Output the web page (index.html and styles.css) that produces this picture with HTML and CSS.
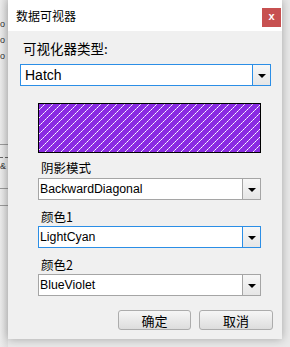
FILE: index.html
```html
<!DOCTYPE html>
<html>

<head>
    <title>数据可视器</title>
    <link rel="stylesheet" href="styles.css">
</head>

<body>
    <div class="backdrop">
        <div class="backdrop-row backdrop-row-first">o</div>
        <div class="backdrop-row">o</div>
        <div class="backdrop-row">o</div>
        <div class="backdrop-line backdrop-line-a"></div>
        <div class="backdrop-line backdrop-line-dash"></div>
        <div class="backdrop-row">&amp;</div>
        <div class="backdrop-line"></div>
        <div class="backdrop-line backdrop-line-b"></div>
    </div>

    <div class="dialog">
        <div class="dialog-title">
            <div class="dialog-title-text">数据可视器</div>
            <div class="dialog-title-close">x</div>
        </div>

        <div class="dialog-body">
            <div class="label label-type">可视化器类型:</div>
            <div class="combo combo-wide combo-focus">
                <div class="combo-text">Hatch</div>
                <div class="combo-button"><span class="combo-arrow"></span></div>
            </div>

            <div class="options">
                <svg class="preview" width="223" height="50" viewBox="0 0 223 50">
                    <defs>
                        <pattern id="hatch" width="8" height="8" patternUnits="userSpaceOnUse">
                            <rect width="8" height="8" fill="#8a2be2" />
                            <rect x="7" y="0" width="1" height="1" fill="#ffffff" />
                            <rect x="6" y="1" width="1" height="1" fill="#d9c2f4" />
                            <rect x="5" y="2" width="1" height="1" fill="#ffffff" />
                            <rect x="4" y="3" width="1" height="1" fill="#d9c2f4" />
                            <rect x="3" y="4" width="1" height="1" fill="#ffffff" />
                            <rect x="2" y="5" width="1" height="1" fill="#d9c2f4" />
                            <rect x="1" y="6" width="1" height="1" fill="#ffffff" />
                            <rect x="0" y="7" width="1" height="1" fill="#d9c2f4" />
                        </pattern>
                    </defs>
                    <rect x="0" y="0" width="223" height="50" fill="#000" />
                    <rect x="1" y="1" width="221" height="48" fill="url(#hatch)" />
                </svg>

                <div class="label label-first">阴影模式</div>
                <div class="combo">
                    <div class="combo-text">BackwardDiagonal</div>
                    <div class="combo-button"><span class="combo-arrow"></span></div>
                </div>

                <div class="label">颜色1</div>
                <div class="combo combo-focus">
                    <div class="combo-text">LightCyan</div>
                    <div class="combo-button"><span class="combo-arrow"></span></div>
                </div>

                <div class="label">颜色2</div>
                <div class="combo">
                    <div class="combo-text">BlueViolet</div>
                    <div class="combo-button"><span class="combo-arrow"></span></div>
                </div>
            </div>

            <div class="buttons">
                <button class="buttons-button">确定</button>
                <button class="buttons-button buttons-button-cancel">取消</button>
            </div>
        </div>
    </div>
</body>

</html>
```

FILE: styles.css
```css
body {
    margin: 0;
    height: 347px;
    overflow: hidden;
    display: flex;
    background: #e9e9e9;
    font-family: "Noto Sans CJK SC", "Liberation Sans", sans-serif;
    color: #000;
}

.backdrop {
    width: 8px;
    height: 347px;
    flex-shrink: 0;
    overflow: hidden;
    display: flex;
    flex-direction: column;
    background: linear-gradient(to right, #ececec, #dedede);
    font-family: "Liberation Sans", sans-serif;
    font-size: 9px;
    color: #333;
}

.backdrop-row {
    height: 16px;
    line-height: 16px;
    white-space: nowrap;
}

.backdrop-row-first {
    margin-top: 16px;
}

.backdrop-line {
    height: 1px;
    margin-top: 14px;
    background: #999;
}

.backdrop-line-a {
    margin-top: 80px;
}

.backdrop-line-dash {
    height: 0;
    margin-top: 12px;
    background: none;
    border-top: 1px dashed #666;
}

.backdrop-line-b {
    margin-top: 16px;
}

.dialog {
    width: 274px;
    height: 339px;
    flex-shrink: 0;
    display: flex;
    flex-direction: column;
    background: #f0f0f0;
    box-shadow: 0 0 9px rgba(0, 0, 0, 0.3);
    position: relative;
}

.dialog-title {
    height: 31px;
    flex-shrink: 0;
    display: flex;
    justify-content: space-between;
    align-items: flex-start;
    background: #fff;
}

.dialog-title-text {
    margin: 8px 0 0 8px;
    font-size: 12px;
    line-height: 15px;
}

.dialog-title-close {
    width: 19px;
    height: 19px;
    margin: 8px 1px 0 0;
    background: #c75050;
    color: #fff;
    font-family: "Liberation Sans", sans-serif;
    font-weight: bold;
    font-size: 11px;
    line-height: 17px;
    text-align: center;
}

.dialog-body {
    display: flex;
    flex-direction: column;
    padding: 0 0 0 12px;
}

.label {
    padding: 10px 0 0 3px;
    height: 26px;
    box-sizing: border-box;
    font-size: 12.5px;
    line-height: 14px;
}

.label-type {
    padding: 10px 0 0 3px;
    height: 33px;
    font-size: 13.5px;
}

.label-first {
    height: 25px;
    padding-top: 8px;
}

.combo {
    width: 223px;
    height: 22px;
    box-sizing: border-box;
    display: flex;
    border: 1px solid #a5a5a5;
    background: #fff;
}

.combo-wide {
    width: 251px;
}

.combo-focus {
    border-color: #2b8ee6;
}

.combo-text {
    flex: 1;
    padding-left: 1px;
    font-family: "Liberation Sans", sans-serif;
    font-size: 12.3px;
    line-height: 20px;
}

.combo-wide .combo-text {
    padding-left: 4px;
    font-size: 14px;
}

.combo-button {
    width: 17px;
    display: flex;
    align-items: center;
    justify-content: center;
    border-left: 1px solid #a5a5a5;
    background: linear-gradient(#f7f7f7, #e6e6e6);
}

.combo-focus .combo-button {
    border-left-color: #2b8ee6;
}

.combo-arrow {
    width: 0;
    height: 0;
    border-left: 4px solid transparent;
    border-right: 4px solid transparent;
    border-top: 4px solid #000;
    margin-top: 1px;
}

.options {
    display: flex;
    flex-direction: column;
    margin-left: 18px;
}

.preview {
    display: block;
    margin-top: 17px;
}

.buttons {
    display: flex;
    justify-content: flex-end;
    gap: 8px;
    margin: 14px 9px 0 0;
}

.buttons-button {
    width: 73px;
    height: 20px;
    padding: 0;
    border: 1px solid #acacac;
    border-radius: 3px;
    background: linear-gradient(#f6f6f6, #dddddd);
    font-family: "Noto Sans CJK SC", sans-serif;
    font-size: 13px;
    line-height: 17px;
    color: #000;
}

.buttons-button-cancel {
    width: 74px;
}
```
